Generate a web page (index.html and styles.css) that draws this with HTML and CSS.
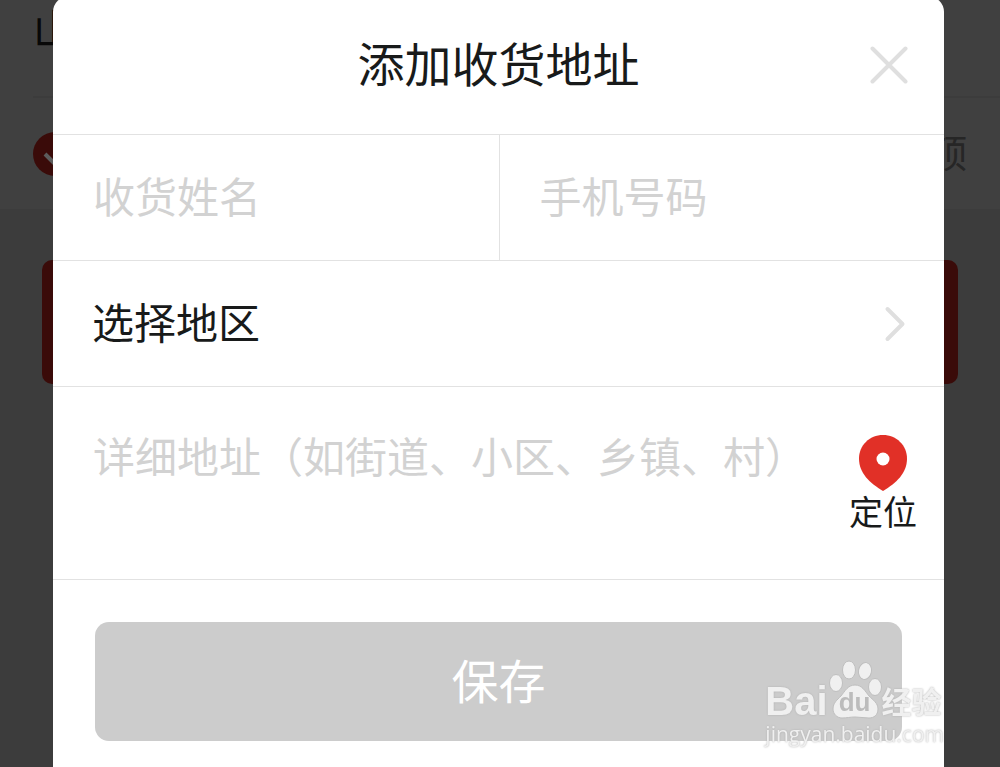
FILE: index.html
```html
<!DOCTYPE html>
<html lang="zh-CN">
<head>
<meta charset="utf-8">
<meta name="viewport" content="width=device-width, initial-scale=1">
<title>添加收货地址</title>
<link rel="stylesheet" href="styles.css">
</head>
<body>
<div class="page" aria-hidden="true">
  <div class="page-card">
    <div class="page-region">山</div>
    <div class="page-option">
      <svg class="page-check" viewBox="0 0 44 44"><circle cx="22" cy="22" r="22" fill="#3a0b09"/><path d="M12 22l8 8 12-13" fill="none" stroke="#5c5c5c" stroke-width="4"/></svg>
      <span class="page-note">顶</span>
    </div>
  </div>
  <div class="page-action"></div>
</div>

<div class="overlay">
  <form class="dialog" role="dialog" aria-labelledby="dialog-title">
    <header class="dialog-header">
      <h1 class="dialog-title" id="dialog-title">添加收货地址</h1>
      <button class="close" type="button" aria-label="关闭">
        <svg width="38" height="38" viewBox="0 0 38 38"><path d="M2.500 2.500l33 33M35.500 2.500l-33 33" fill="none" stroke="#dfdfdf" stroke-width="4" stroke-linecap="round"/></svg>
      </button>
    </header>
    <div class="row contact">
      <input class="field" type="text" name="name" placeholder="收货姓名" aria-label="收货姓名">
      <input class="field" type="tel" name="phone" placeholder="手机号码" aria-label="手机号码">
    </div>
    <button class="row region" type="button">
      <span class="region-label">选择地区</span>
      <svg width="22" height="36" viewBox="0 0 22 36"><path d="M3.500 3l15 15-15 15" fill="none" stroke="#dfdfdf" stroke-width="4" stroke-linecap="round" stroke-linejoin="round"/></svg>
    </button>
    <div class="row address">
      <textarea class="detail" name="address" rows="2" placeholder="详细地址（如街道、小区、乡镇、村）" aria-label="详细地址"></textarea>
      <button class="locate" type="button">
        <svg width="48" height="56" viewBox="0 0 48 56"><path d="M24 0C10.500 0 0 10.500 0 23.500c0 15 11 24.500 24 32.500 13-8 24-17.500 24-32.500C48 10.500 37.500 0 24 0z" fill="#e13027"/><circle cx="24" cy="24" r="6.500" fill="#fff"/></svg>
        <span>定位</span>
      </button>
    </div>
    <div class="footer">
      <button class="save" type="submit">保存</button>
    </div>
  </form>
</div>

<div class="watermark">
  <div class="brand">
    <span class="brand-name">Bai</span>
    <span class="paw">
      <svg width="54" height="60" viewBox="0 0 54 60" fill="#f0f0f0" stroke="#bebebe" stroke-width="1"><ellipse cx="8" cy="24" rx="6.500" ry="8.500"/><ellipse cx="21" cy="11" rx="6.500" ry="9"/><ellipse cx="37" cy="12" rx="6.500" ry="8.500" transform="rotate(10 37 12)"/><ellipse cx="47" cy="28" rx="6.500" ry="8.500"/><path d="M27 26c7 0 10 6 14 11 4 4 9 7 9 13 0 6-4 9-9 9-5 0-9-1-14-1s-8 1-13 1c-5 0-9-4-9-9 0-6 4-9 8-13 4-5 7-11 14-11z"/></svg>
      <b class="paw-text">du</b>
    </span>
    <span class="brand-cn">经验</span>
  </div>
  <div class="brand-url">jingyan.baidu.com</div>
</div>
</body>
</html>
```
FILE: styles.css
```css
* {
  box-sizing: border-box;
}

body {
  margin: 0;
  min-height: 100vh;
  overflow: hidden;
  background: #3c3c3c;
  color: #181a1a;
  font-family: "Noto Sans CJK SC", "Noto Sans", sans-serif;
}

button,
input,
textarea {
  margin: 0;
  padding: 0;
  border: 0;
  background: none;
  color: inherit;
  font: inherit;
}

svg {
  display: block;
  flex: none;
}

.page-card {
  padding-left: 33px;
  background: #404040;
}

.page-region {
  height: 98px;
  border-bottom: 2px solid #3c3c3c;
  color: #080808;
  font-size: 42px;
  line-height: 54px;
}

.page-option {
  display: flex;
  align-items: center;
  justify-content: space-between;
  height: 111px;
  padding-right: 33px;
}

.page-check {
  width: 44px;
  height: 44px;
}

.page-note {
  padding-bottom: 6px;
  color: #262626;
  font-size: 38px;
}

.page-action {
  height: 124px;
  margin: 51px 42px 0;
  border-radius: 10px;
  background: #3a0b09;
}

.overlay {
  position: fixed;
  inset: -4px 0 0;
  display: flex;
  padding: 0 56px 0 53px;
}

.dialog {
  flex: 1;
  min-width: 0;
  border-radius: 16px 16px 0 0;
  background: #fff;
  font-size: 42px;
}

.dialog-header {
  display: grid;
  grid-template-columns: 1fr auto 1fr;
  align-items: center;
  height: 139px;
  padding: 0 36px;
  border-bottom: 1px solid #e2e2e2;
}

.dialog-title {
  grid-column: 2;
  margin: 0;
  padding-bottom: 8px;
  font-size: 47px;
  font-weight: 400;
}

.close {
  justify-self: end;
}

.row {
  width: 100%;
  min-height: 126px;
  border-bottom: 1px solid #e2e2e2;
}

.contact {
  display: grid;
  grid-template-columns: 1fr 1fr;
}

.field {
  min-width: 0;
  padding: 0 40px 6px;
}

.field + .field {
  border-left: 1px solid #e2e2e2;
}

.field::placeholder,
.detail::placeholder {
  color: #d2d2d2;
  opacity: 1;
}

.region {
  display: flex;
  align-items: center;
  justify-content: space-between;
  padding: 0 38px 0 39px;
  text-align: left;
}

.region-label {
  padding-bottom: 6px;
}

.address {
  display: flex;
  align-items: flex-start;
  justify-content: space-between;
  height: 193px;
  padding: 38px 27px 0 40px;
}

.detail {
  flex: 1;
  min-width: 0;
  height: 120px;
  line-height: 60px;
  resize: none;
  overflow: hidden;
}

.locate {
  display: flex;
  flex-direction: column;
  align-items: center;
  padding-top: 10px;
  font-size: 34px;
  line-height: 40px;
}

.footer {
  padding: 42px;
}

.save {
  width: 100%;
  height: 119px;
  padding-bottom: 6px;
  border-radius: 14px;
  background: #ccc;
  color: #fff;
  font-size: 47px;
}

.watermark {
  position: fixed;
  right: 56px;
  bottom: 20px;
  color: #f0f0f0;
  text-shadow: 0 0 2px #aaa;
}

.brand {
  display: flex;
  align-items: flex-end;
  height: 60px;
}

.brand-name {
  font: bold 40px/36px "Liberation Sans", sans-serif;
}

.paw {
  display: grid;
  place-items: end center;
}

.paw svg,
.paw-text {
  grid-area: 1 / 1;
}

.paw-text {
  color: #bcbcbc;
  font: bold 26px/34px "Liberation Sans", sans-serif;
  text-shadow: none;
}

.brand-cn {
  padding-bottom: 4px;
  font-size: 30px;
  font-weight: 700;
  line-height: 30px;
}

.brand-url {
  padding-top: 2px;
  font: 21px/26px "Open Sans", sans-serif;
}
```
